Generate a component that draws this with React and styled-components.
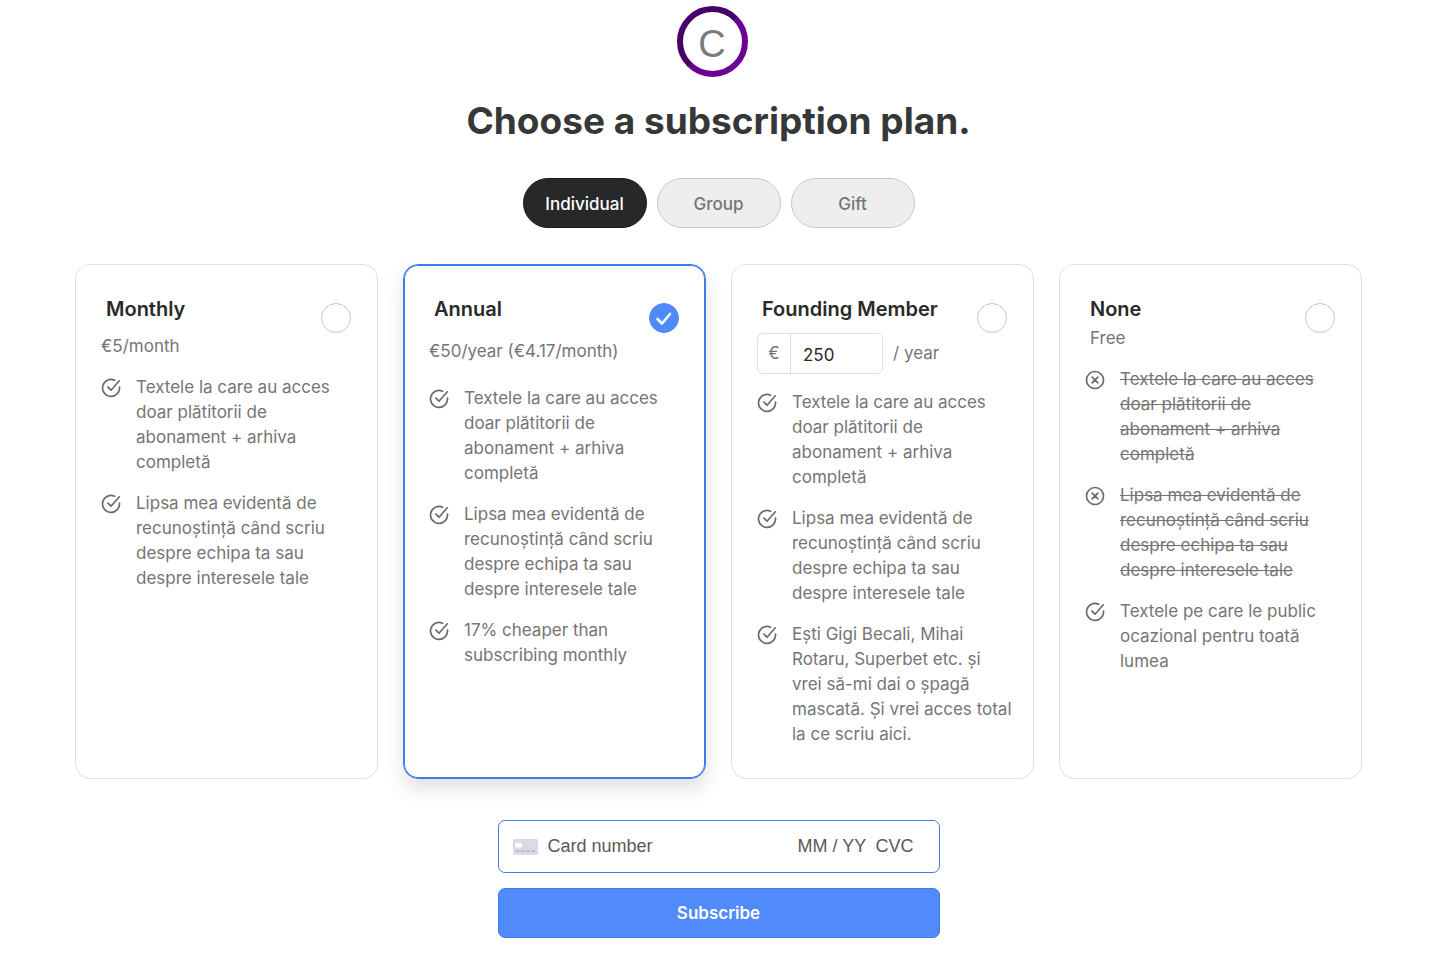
import React, { useState } from 'react';
import styled, { createGlobalStyle } from 'styled-components';

const GlobalStyle = createGlobalStyle`
  * {
    box-sizing: border-box;
  }

  body {
    background: #fff;
    color: #757575;
    font-family: Inter, 'Liberation Sans', sans-serif;
    font-size: 17px;
    line-height: 25px;
    margin: 0;
  }
`;

const Page = styled.main`
  align-items: center;
  display: flex;
  flex-direction: column;
  padding: 6px 94px 20px 75px;
`;

const Logo = styled.svg`
  display: block;
  margin-right: 13px;
`;

const Heading = styled.h1`
  color: #363737;
  font-size: 37px;
  font-weight: 700;
  line-height: 48px;
  margin: 20px 0 33px;
  text-align: center;
`;

const Tabs = styled.div`
  display: flex;
  gap: 10px;
  margin-bottom: 36px;
`;

const Tab = styled.button`
  background: ${({ $active }) => ($active ? '#27282a' : '#eee')};
  border: 1px solid ${({ $active }) => ($active ? '#1b1c1d' : '#c8c8c8')};
  border-radius: 25px;
  color: ${({ $active }) => ($active ? '#fff' : '#757575')};
  cursor: pointer;
  font-family: inherit;
  font-size: 17px;
  font-weight: 500;
  height: 50px;
  padding: 2px 0 0;
  width: 124px;
`;

const Plans = styled.div`
  display: grid;
  gap: 25px;
  grid-template-columns: repeat(4, minmax(0, 1fr));
  margin-bottom: 41px;
  max-width: 1288px;
  width: 100%;
`;

const Card = styled.section`
  border: 1px solid ${({ $selected }) => ($selected ? '#3f7bea' : '#e0e0e0')};
  border-radius: 15px;
  box-shadow: ${({ $selected }) =>
    $selected
      ? 'inset 0 0 0 1px #3f7bea, 0 10px 20px rgba(0, 0, 0, 0.12)'
      : 'none'};
  padding: 32px 19px 31px 25px;
`;

const CardHeader = styled.div`
  align-items: flex-start;
  display: flex;
  justify-content: space-between;
  margin-bottom: ${({ $space }) => $space}px;
`;

const PlanName = styled.label`
  color: #292929;
  display: block;
  font-size: 20px;
  font-weight: 600;
  line-height: 24px;
  padding-left: 5px;
  white-space: nowrap;
`;

const Price = styled.div`
  align-items: center;
  display: flex;
  margin-top: ${({ $space }) => $space}px;
  padding-left: ${({ $indent }) => ($indent ? 5 : 0)}px;
  white-space: nowrap;
`;

const Radio = styled.input`
  appearance: none;
  background: #fff;
  border: 1px solid #c8c8c8;
  border-radius: 50%;
  cursor: pointer;
  flex: none;
  height: 30px;
  margin: 0;
  width: 30px;

  &:checked {
    background: #4e8afb;
    border-color: #4e8afb;
  }
`;

const RadioBox = styled.span`
  display: grid;
  flex: none;
  margin: 6px 7px 0 0;

  > * {
    grid-area: 1 / 1;
    place-self: center;
  }

  svg {
    pointer-events: none;
  }
`;

const AmountBox = styled.div`
  border: 1px solid #ddd;
  border-radius: 6px;
  display: flex;
  height: 41px;
  margin-right: 10px;
  overflow: hidden;
  width: 126px;
`;

const Currency = styled.label`
  align-items: center;
  border-right: 1px solid #ddd;
  display: flex;
  flex: none;
  justify-content: center;
  width: 33px;
`;

const Amount = styled.input`
  border: 0;
  color: #292929;
  font-family: inherit;
  font-size: 17px;
  min-width: 0;
  outline: none;
  padding: 2px 12px 0;
  width: 100%;
`;

const Features = styled.ul`
  display: flex;
  flex-direction: column;
  gap: 16px;
  list-style: none;
  margin: 0;
  padding: 0;
`;

const Feature = styled.li`
  display: flex;
  gap: 15px;

  svg {
    color: #6b6b6b;
    flex: none;
    margin-top: 2px;
  }
`;

const FeatureText = styled.span`
  text-decoration: ${({ $off }) => ($off ? 'line-through' : 'none')};
`;

const Form = styled.form`
  display: flex;
  flex-direction: column;
  gap: 15px;
  max-width: 442px;
  width: 100%;
`;

const CardField = styled.div`
  align-items: center;
  border: 1px solid #3f7bea;
  border-radius: 7px;
  display: flex;
  gap: 10px;
  height: 53px;
  padding: 0 25px 0 14px;
`;

const CardInput = styled.input`
  border: 0;
  flex: ${({ $width }) => ($width ? 'none' : '1')};
  font-family: 'Liberation Sans', Arial, sans-serif;
  font-size: 18px;
  height: 30px;
  min-width: 0;
  outline: none;
  padding: 0;
  width: ${({ $width }) => ($width ? `${$width}px` : 'auto')};

  &::placeholder {
    color: #595959;
    opacity: 1;
  }
`;

const Submit = styled.button`
  background: #518bfb;
  border: 1px solid #3f7bea;
  border-radius: 7px;
  color: #fff;
  cursor: pointer;
  font-family: inherit;
  font-size: 17px;
  font-weight: 600;
  height: 50px;
`;

const textPaid = 'Textele la care au acces doar plătitorii de abonament + arhiva completă';
const textMention =
  'Lipsa mea evidentă de recunoștință când scriu despre echipa ta sau despre interesele tale';

const plans = [
  {
    id: 'monthly',
    name: 'Monthly',
    price: '€5/month',
    priceSpace: 13,
    listSpace: 16,
    features: [{ text: textPaid }, { text: textMention }],
  },
  {
    id: 'annual',
    name: 'Annual',
    price: '€50/year (€4.17/month)',
    priceSpace: 18,
    listSpace: 22,
    features: [
      { text: textPaid },
      { text: textMention },
      { text: '17% cheaper than subscribing monthly' },
    ],
  },
  {
    id: 'founding',
    name: 'Founding Member',
    editable: true,
    priceSpace: 12,
    listSpace: 16,
    features: [
      { text: textPaid },
      { text: textMention },
      {
        text:
          'Ești Gigi Becali, Mihai Rotaru, Superbet etc. și vrei să-mi dai o șpagă mascată. Și vrei acces total la ce scriu aici.',
      },
    ],
  },
  {
    id: 'none',
    name: 'None',
    price: 'Free',
    indent: true,
    priceSpace: 5,
    listSpace: 16,
    features: [
      { text: textPaid, off: true },
      { text: textMention, off: true },
      { text: 'Textele pe care le public ocazional pentru toată lumea' },
    ],
  },
];

const FeatureIcon = ({ off }) => (
  <svg
    width="20"
    height="22"
    viewBox="0 -1 20 22"
    fill="none"
    stroke="currentColor"
    strokeWidth="1.7"
    strokeLinecap="round"
    strokeLinejoin="round"
    aria-hidden="true"
  >
    {off ? (
      <>
        <circle cx="10" cy="10" r="8.5" />
        <path d="M7.1 7.1l5.8 5.8M12.9 7.1l-5.8 5.8" />
      </>
    ) : (
      <>
        <path d="M18.5 9.2A8.5 8.5 0 1 1 13.6 2.2" />
        <path d="M6.9 9.1l3.1 3.1L18.3 2.8" />
      </>
    )}
  </svg>
);

const Plan = ({ plan, selected, onSelect }) => {
  const [amount, setAmount] = useState('250');

  return (
    <Card $selected={selected}>
      <CardHeader $space={plan.listSpace}>
        <div>
          <PlanName htmlFor={plan.id}>{plan.name}</PlanName>
          <Price $space={plan.priceSpace} $indent={plan.indent}>
            {plan.editable ? (
              <>
                <AmountBox>
                  <Currency htmlFor="amount">€</Currency>
                  <Amount
                    id="amount"
                    value={amount}
                    onChange={event => setAmount(event.target.value)}
                  />
                </AmountBox>
                / year
              </>
            ) : (
              plan.price
            )}
          </Price>
        </div>
        <RadioBox>
          <Radio
            type="radio"
            name="plan"
            id={plan.id}
            checked={selected}
            onChange={() => onSelect(plan.id)}
          />
          {selected && (
            <svg width="18" height="18" viewBox="0 0 18 18" fill="none" aria-hidden="true">
              <path
                d="M2.5 10l4.5 4.5 8-9.5"
                stroke="#fff"
                strokeWidth="2.6"
                strokeLinecap="round"
                strokeLinejoin="round"
              />
            </svg>
          )}
        </RadioBox>
      </CardHeader>
      <Features>
        {plan.features.map(({ text, off }) => (
          <Feature key={text}>
            <FeatureIcon off={off} />
            <FeatureText $off={off}>{text}</FeatureText>
          </Feature>
        ))}
      </Features>
    </Card>
  );
};

const App = () => {
  const [tab, setTab] = useState('Individual');
  const [selected, setSelected] = useState('annual');

  return (
    <Page>
      <GlobalStyle />
      <Logo width="71" height="71" viewBox="0 0 71 71">
        <defs>
          <linearGradient id="ring" x1="0" y1="0" x2="1" y2="1">
            <stop offset="0" stopColor="#4d0070" />
            <stop offset="0.5" stopColor="#430060" />
            <stop offset="0.5" stopColor="#6a0092" />
            <stop offset="1" stopColor="#6c0094" />
          </linearGradient>
        </defs>
        <circle cx="35.5" cy="35.5" r="32.5" fill="#fff" stroke="url(#ring)" strokeWidth="6" />
        <text
          x="35"
          y="51"
          fill="#7b7b7b"
          fontFamily="'Liberation Sans', Arial, sans-serif"
          fontSize="38"
          textAnchor="middle"
        >
          C
        </text>
      </Logo>
      <Heading>Choose a subscription plan.</Heading>
      <Tabs>
        {['Individual', 'Group', 'Gift'].map(name => (
          <Tab key={name} type="button" $active={name === tab} onClick={() => setTab(name)}>
            {name}
          </Tab>
        ))}
      </Tabs>
      <Plans>
        {plans.map(plan => (
          <Plan
            key={plan.id}
            plan={plan}
            selected={plan.id === selected}
            onSelect={setSelected}
          />
        ))}
      </Plans>
      <Form onSubmit={event => event.preventDefault()}>
        <CardField>
          <svg width="25" height="16" viewBox="0 0 25 16" aria-hidden="true">
            <rect width="25" height="16" rx="1.5" fill="#d9dce5" />
            <rect x="2" y="4" width="7" height="4.5" rx="1" fill="#fff" />
            <path d="M2.5 12h19.5" stroke="#b0b5c5" strokeWidth="1.4" strokeDasharray="4 1.2" />
          </svg>
          <CardInput aria-label="Card number" placeholder="Card number" />
          <CardInput aria-label="Expiry date" placeholder="MM / YY" $width={68} />
          <CardInput aria-label="CVC" placeholder="CVC" $width={38} />
        </CardField>
        <Submit type="submit">Subscribe</Submit>
      </Form>
    </Page>
  );
};

export default App;
